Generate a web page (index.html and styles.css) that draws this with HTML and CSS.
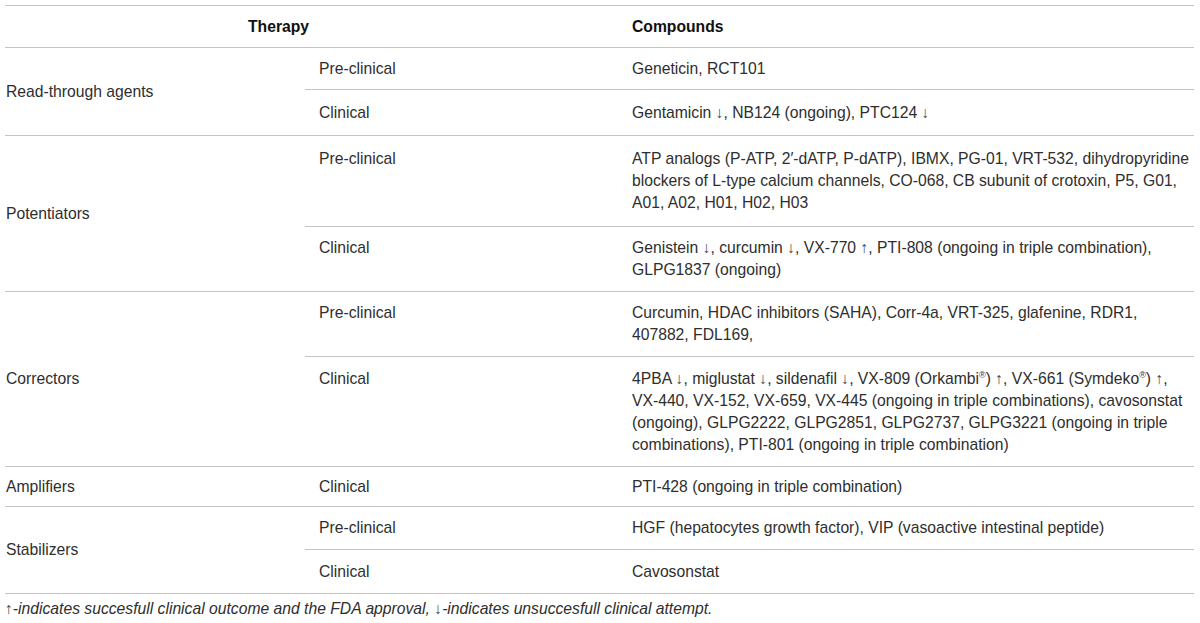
FILE: index.html
```html
<!DOCTYPE html>
<html lang="en">
<head>
	<meta charset="UTF-8">
	<meta name="viewport" content="width=device-width, initial-scale=1.0">
	<title>CFTR modulators by therapy</title>
	<link rel="stylesheet" href="styles.css">
</head>
<body>

	<div class="table-wrap">
		<table class="therapy-table">
			<colgroup>
				<col class="col-group">
				<col class="col-stage">
				<col class="col-compounds">
			</colgroup>
			<thead>
				<tr>
					<th colspan="2" class="th-therapy">Therapy</th>
					<th class="th-compounds">Compounds</th>
				</tr>
			</thead>
			<tbody>
				<!-- Read-through agents -->
				<tr class="row-tight">
					<td rowspan="2" class="group">Read-through agents</td>
					<td class="stage">Pre-clinical</td>
					<td>Geneticin, RCT101</td>
				</tr>
				<tr class="row-arrows">
					<td class="stage">Clinical</td>
					<td>Gentamicin <span class="arrow">↓</span>, NB124 (ongoing), PTC124 <span class="arrow">↓</span></td>
				</tr>

				<!-- Potentiators -->
				<tr class="row-tall">
					<td rowspan="2" class="group">Potentiators</td>
					<td class="stage">Pre-clinical</td>
					<td>ATP analogs (P-ATP, 2′-dATP, P-dATP), IBMX, PG-01, VRT-532, dihydropyridine blockers of L-type calcium channels, CO-068, CB subunit of crotoxin, P5, G01, A01, A02, H01, H02, H03</td>
				</tr>
				<tr>
					<td class="stage">Clinical</td>
					<td>Genistein <span class="arrow">↓</span>, curcumin <span class="arrow">↓</span>, VX-770 <span class="arrow">↑</span>, PTI-808 (ongoing in triple combination), GLPG1837 (ongoing)</td>
				</tr>

				<!-- Correctors -->
				<tr>
					<td rowspan="2" class="group">Correctors</td>
					<td class="stage">Pre-clinical</td>
					<td>Curcumin, HDAC inhibitors (SAHA), Corr-4a, VRT-325, glafenine, RDR1, 407882, FDL169,</td>
				</tr>
				<tr class="row-loose">
					<td class="stage">Clinical</td>
					<td>4PBA <span class="arrow">↓</span>, miglustat <span class="arrow">↓</span>, sildenafil <span class="arrow">↓</span>, VX-809 (Orkambi<sup>®</sup>) <span class="arrow">↑</span>, VX-661 (Symdeko<sup>®</sup>) <span class="arrow">↑</span>, VX-440, VX-152, VX-659, VX-445 (ongoing in triple combinations), cavosonstat (ongoing), GLPG2222, GLPG2851, GLPG2737, GLPG3221 (ongoing in triple combinations), PTI-801 (ongoing in triple combination)</td>
				</tr>

				<!-- Amplifiers -->
				<tr class="row-short">
					<td class="group">Amplifiers</td>
					<td class="stage">Clinical</td>
					<td>PTI-428 (ongoing in triple combination)</td>
				</tr>

				<!-- Stabilizers -->
				<tr>
					<td rowspan="2" class="group">Stabilizers</td>
					<td class="stage">Pre-clinical</td>
					<td>HGF (hepatocytes growth factor), VIP (vasoactive intestinal peptide)</td>
				</tr>
				<tr class="row-loose">
					<td class="stage">Clinical</td>
					<td>Cavosonstat</td>
				</tr>
			</tbody>
		</table>

		<p class="footnote"><span class="arrow">↑</span>-indicates succesfull clinical outcome and the FDA approval, <span class="arrow">↓</span>-indicates unsuccesfull clinical attempt.</p>
	</div>

</body>
</html>
```

FILE: styles.css
```css
body {
	margin: 0;
	font-family: "Liberation Sans", Arial, sans-serif;
	font-size: 15.7px;
	color: #2e2e2e;
	background: #fff;
}
.table-wrap {
	padding: 5px 6px 0 5px;
}
.therapy-table {
	width: 100%;
	border-collapse: collapse;
	table-layout: fixed;
	border-top: 1px solid #c4c4c4;
}
.col-group {
	width: 300px;
}
.col-stage {
	width: 313px;
}
th, td {
	padding: 10px 14px;
	line-height: 22px;
	text-align: left;
	vertical-align: top;
	border-bottom: 1px solid #c4c4c4;
}
th:last-child, td:last-child {
	padding-right: 0;
}
th {
	padding-bottom: 9px;
	font-weight: bold;
	color: #111;
}
.th-therapy {
	padding-left: 243px;
}
td.group {
	padding-left: 1px;
	vertical-align: middle;
}
/* row heights differ a little in the source table */
.row-tight td {
	padding-bottom: 9px;
}
.row-arrows td {
	padding-top: 12px;
	padding-bottom: 11px;
}
.row-tall td {
	padding-top: 12px;
	padding-bottom: 12px;
}
.row-loose td {
	padding-top: 11px;
}
.row-short td {
	padding-top: 9px;
	padding-bottom: 8px;
}
.arrow {
	color: #444;
}
sup {
	font-size: 9px;
	line-height: 0;
}
.footnote {
	margin: 4px 0 0;
	font-style: italic;
	line-height: 22px;
}
```
